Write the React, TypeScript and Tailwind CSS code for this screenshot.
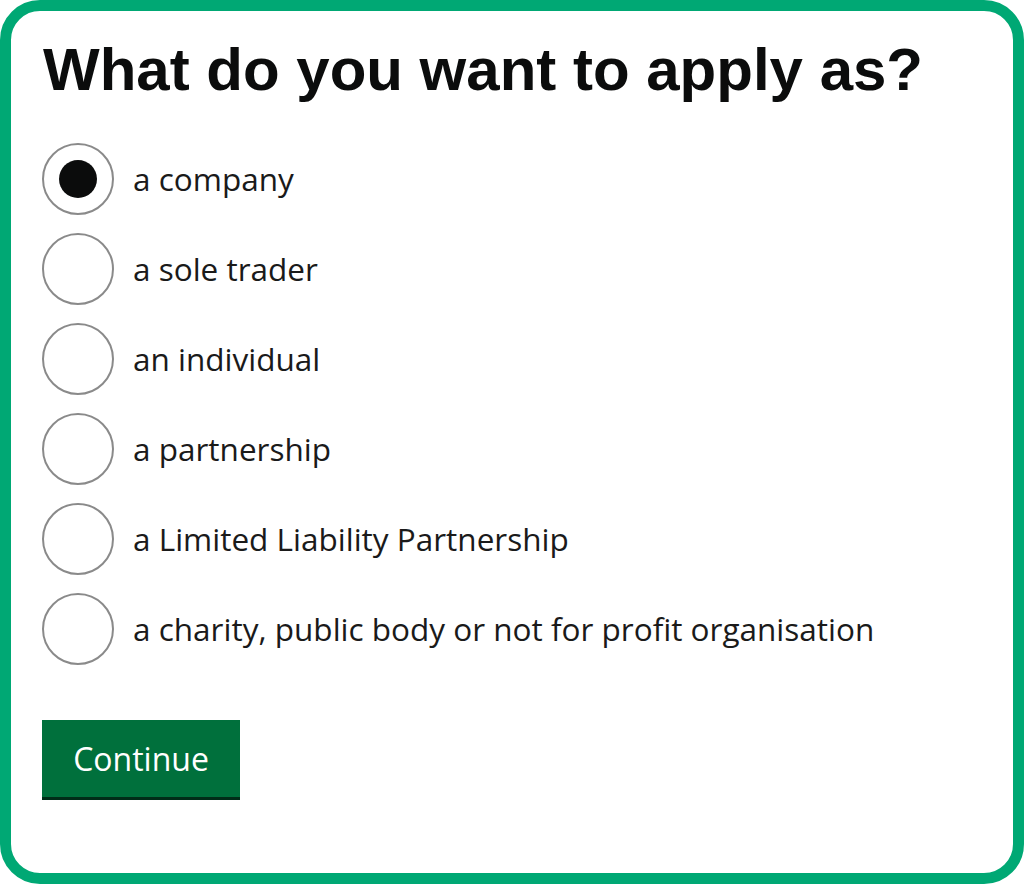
import React, { useState } from "react";

const options = [
  "a company",
  "a sole trader",
  "an individual",
  "a partnership",
  "a Limited Liability Partnership",
  "a charity, public body or not for profit organisation",
];

const App = () => {
  const [selected, setSelected] = useState(0);

  return (
    <div className="w-[1024px] h-[884px] bg-white">
      <div className="w-[1024px] h-[884px] border-[11px] border-[#00a874] rounded-[40px] bg-white pl-[31px] pt-[23px]">
        <h1 className="font-['Liberation_Sans',sans-serif] font-bold text-[60px] leading-[72px] text-[#0b0c0c] pl-[1px]">
          What do you want to apply as?
        </h1>

        {/* radio list */}
        <div className="flex flex-col gap-[18px] mt-[37px]">
          {options.map((label, i) => (
            <label
              key={label}
              className="flex items-center gap-[19px] cursor-pointer"
              onClick={() => setSelected(i)}
            >
              <span className="w-[72px] h-[72px] rounded-full border-2 border-[#8a8a8a] bg-white flex items-center justify-center shrink-0">
                {selected === i && (
                  <span className="w-[38px] h-[38px] rounded-full bg-[#0b0c0c]"></span>
                )}
              </span>
              <span className="font-['Open_Sans',sans-serif] text-[31.5px] text-[#1a1a1a]">
                {label}
              </span>
            </label>
          ))}
        </div>

        <button className="mt-[55px] w-[198px] h-[77px] bg-[#00703c] text-white font-['Open_Sans',sans-serif] text-[32px] shadow-[0_3px_0_#002d18] flex items-center justify-center">
          Continue
        </button>
      </div>
    </div>
  );
};

export default App;
